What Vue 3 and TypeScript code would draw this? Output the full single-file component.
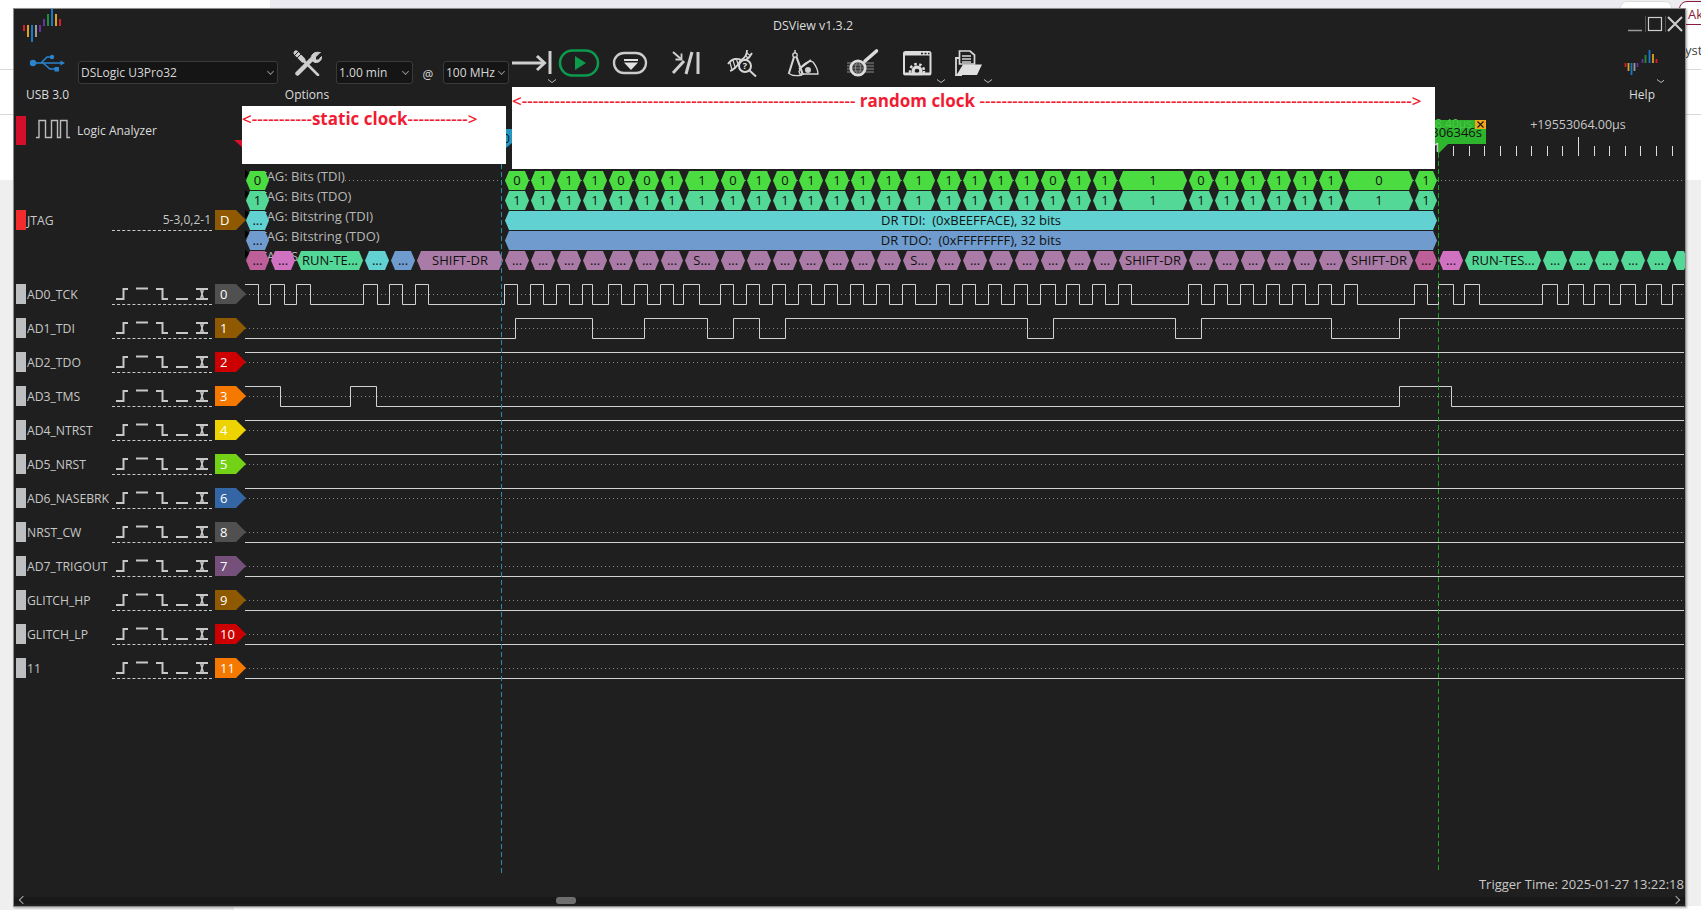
<script setup lang="ts">
type Signal = { name: string; tag: string; color: string; edges: number[]; high: boolean };

const tck = [258, 270, 284, 296, 310, 363, 377, 389, 402, 415, 428, 504, 517, 530, 543, 556, 569, 582, 592, 608, 621, 634, 647, 660, 673, 683, 699, 720, 733, 746, 759, 772, 785, 798, 811, 824, 837, 850, 863, 876, 889, 902, 915, 936, 949, 962, 975, 988, 1001, 1014, 1027, 1040, 1055, 1066, 1079, 1092, 1105, 1118, 1131, 1188, 1201, 1214, 1227, 1240, 1253, 1266, 1279, 1292, 1305, 1318, 1331, 1344, 1357, 1414, 1427, 1438, 1453, 1464, 1479, 1542, 1557, 1568, 1583, 1594, 1609, 1620, 1635, 1646, 1661, 1672];
const tdi = [515, 592, 644, 707, 733, 759, 785, 1027, 1053, 1175, 1201, 1331, 1399];
const tms = [280, 350, 376, 1399, 1451];

const signals: Signal[] = [
  { name: 'AD0_TCK', tag: '0', color: '#505050', edges: tck, high: true },
  { name: 'AD1_TDI', tag: '1', color: '#8f5902', edges: tdi, high: false },
  { name: 'AD2_TDO', tag: '2', color: '#cc0000', edges: [], high: true },
  { name: 'AD3_TMS', tag: '3', color: '#f57900', edges: tms, high: true },
  { name: 'AD4_NTRST', tag: '4', color: '#edd400', edges: [], high: true },
  { name: 'AD5_NRST', tag: '5', color: '#73d216', edges: [], high: true },
  { name: 'AD6_NASEBRK', tag: '6', color: '#3465a4', edges: [], high: true },
  { name: 'NRST_CW', tag: '8', color: '#505050', edges: [], high: false },
  { name: 'AD7_TRIGOUT', tag: '7', color: '#75507b', edges: [], high: false },
  { name: 'GLITCH_HP', tag: '9', color: '#8f5902', edges: [], high: false },
  { name: 'GLITCH_LP', tag: '10', color: '#cc0000', edges: [], high: false },
  { name: '11', tag: '11', color: '#f57900', edges: [], high: false },
];

const START = 245;
const END = 1684;

function wave(s: Signal, i: number): string {
  const c = 294 + 34 * i;
  let high = s.high;
  let d = `M${START} ${c + (high ? -10 : 10) + 0.5}`;
  for (const e of s.edges) {
    high = !high;
    d += `H${e + 0.5}V${c + (high ? -10 : 10) + 0.5}`;
  }
  return d + `H${END}`;
}

function hexPoints(x0: number, x1: number, y: number): string {
  const t = y - 9.5;
  const b = y + 9.5;
  return `${x0},${y} ${x0 + 4},${t} ${x1 - 4},${t} ${x1},${y} ${x1 - 4},${b} ${x0 + 4},${b}`;
}

const GREEN = '#4bdc42';
const TEAL = '#54d897';
const CYAN = '#61d1d1';
const BLUE = '#6f9bce';
const PURPLE = '#aa7ba6';
const PINKD = '#bd5f98';
const PINK = '#d072c1';

const bounds = [504, 530, 556, 582, 608, 634, 660, 684, 720, 746, 772, 798, 824, 850, 876, 902, 936, 962, 988, 1014, 1040, 1066, 1092, 1118, 1188, 1214, 1240, 1266, 1292, 1318, 1344, 1414, 1438];
const bits = '01110011010111111111011101111101';
const names: Record<number, string> = { 7: 'S...', 15: 'S...', 23: 'SHIFT-DR', 30: 'SHIFT-DR' };

type Hex = { x0: number; x1: number; y: number; fill: string; text: string };
const hexes: Hex[] = [
  { x0: 246, x1: 269, y: 180.5, fill: GREEN, text: '0' },
  { x0: 246, x1: 269, y: 200.5, fill: TEAL, text: '1' },
  { x0: 246, x1: 269, y: 220.5, fill: CYAN, text: '...' },
  { x0: 246, x1: 269, y: 240.5, fill: BLUE, text: '...' },
  { x0: 246, x1: 269, y: 260.5, fill: PINKD, text: '...' },
  { x0: 271, x1: 295, y: 260.5, fill: PINK, text: '...' },
  { x0: 297, x1: 363, y: 260.5, fill: TEAL, text: 'RUN-TE...' },
  { x0: 365, x1: 389, y: 260.5, fill: CYAN, text: '...' },
  { x0: 391, x1: 415, y: 260.5, fill: BLUE, text: '...' },
  { x0: 417, x1: 503, y: 260.5, fill: PURPLE, text: 'SHIFT-DR' },
  { x0: 505, x1: 1437, y: 220.5, fill: CYAN, text: 'DR TDI:  (0xBEEFFACE), 32 bits' },
  { x0: 505, x1: 1437, y: 240.5, fill: BLUE, text: 'DR TDO:  (0xFFFFFFFF), 32 bits' },
  { x0: 1439, x1: 1463, y: 260.5, fill: PINK, text: '...' },
  { x0: 1465, x1: 1541, y: 260.5, fill: TEAL, text: 'RUN-TES...' },
  ...[1543, 1569, 1595, 1621, 1647].map((x) => ({ x0: x, x1: x + 24, y: 260.5, fill: TEAL, text: '...' })),
  { x0: 1673, x1: 1688, y: 260.5, fill: TEAL, text: '' },
];
for (let i = 0; i < 32; i++) {
  const x0 = bounds[i] + 1;
  const x1 = bounds[i + 1] - 1;
  hexes.push({ x0, x1, y: 180.5, fill: GREEN, text: bits[i] });
  hexes.push({ x0, x1, y: 200.5, fill: TEAL, text: '1' });
  hexes.push({ x0, x1, y: 260.5, fill: i === 31 ? PINKD : PURPLE, text: i === 31 ? '...' : names[i] ?? '...' });
}

const decoders = ['JTAG: Bits (TDI)', 'JTAG: Bits (TDO)', 'JTAG: Bitstring (TDI)', 'JTAG: Bitstring (TDO)', 'JTAG: S'];
const ticks = [1453, 1469, 1484, 1500, 1516, 1531, 1547, 1562, 1594, 1609, 1625, 1640, 1656, 1672];
const centers = signals.map((_, i) => 294 + 34 * i);
const logoBars = [
  { x: 1, y1: 16, y2: 22, c: '#d81e2c' },
  { x: 5, y1: 16, y2: 28, c: '#e0a020' },
  { x: 9, y1: 16, y2: 33, c: '#1a78c8' },
  { x: 13, y1: 16, y2: 28, c: '#9a9a9a' },
  { x: 17, y1: 16, y2: 23, c: '#6a2fa0' },
  { x: 21, y1: 10, y2: 17, c: '#6a2fa0' },
  { x: 25, y1: 5, y2: 17, c: '#1f8f3a' },
  { x: 29, y1: 0, y2: 17, c: '#1a78c8' },
  { x: 33, y1: 5, y2: 17, c: '#e0a020' },
  { x: 37, y1: 10, y2: 17, c: '#d81e2c' },
];
const d = (n: number): string => '-'.repeat(n);
</script>

<template>
  <div class="page">
    <div class="bd bd-top"></div>
    <div class="bd bd-white-left"></div>
    <div class="bd bd-white-right"></div>
    <div class="bd bd-line1"></div>
    <div class="bd bd-line2"></div>
    <div class="bd bd-pill"></div>
    <div class="bd bd-tab">Ak</div>
    <div class="bd bd-ystk">ystk</div>
    <div class="bd bd-bottom"></div>

    <div class="window">
      <header class="titlebar">
        <svg class="logo" width="38" height="33" viewBox="0 0 38 33">
          <line v-for="b in logoBars" :key="b.x" :x1="b.x" :x2="b.x" :y1="b.y1" :y2="b.y2" :stroke="b.c" stroke-width="2" />
        </svg>
        <span class="title">DSView v1.3.2</span>
        <div class="controls">
          <svg width="56" height="33" viewBox="1628 9 56 33">
            <g stroke="#cfcfcf" fill="none">
              <path d="M1628 30.5H1642" stroke-width="1.5" stroke="#999" />
              <path d="M1645.5 16V32" stroke="#555" />
              <rect x="1648.5" y="17.5" width="13" height="13" stroke-width="1.2" />
              <path d="M1665.5 16V32" stroke="#555" />
              <path d="M1668 17L1682 31M1682 17L1668 31" stroke-width="2" />
            </g>
          </svg>
        </div>
      </header>

      <div class="toolbar">
        <div class="tool tool-usb">
          <svg width="45" height="30" viewBox="25 46 45 30">
            <g fill="#2a85d0" stroke="#2a85d0">
              <circle cx="33" cy="63" r="3.2" stroke="none" />
              <path d="M33 63H62" stroke-width="1.5" fill="none" />
              <path d="M65 63L60.5 60.5V65.5Z" stroke="none" />
              <path d="M41 63L47 57H52M43 63L50 69H55" stroke-width="1.5" fill="none" />
              <circle cx="52" cy="57" r="2.2" stroke="none" />
              <rect x="54.5" y="67" width="4.5" height="4.5" stroke="none" />
            </g>
          </svg>
          <span class="tool-label">USB 3.0</span>
        </div>
        <div class="combo combo-dev"><span>DSLogic U3Pro32</span><i class="chev"></i></div>
        <div class="tool tool-opt">
          <svg width="44" height="30" viewBox="285 46 44 30">
            <g fill="none" stroke="#cdcdcd" stroke-linecap="round">
              <path d="M297.5 73.5L311 60" stroke-width="4.5" />
              <path d="M320 52.5L315.5 57V60H318.5L321.5 56.5C322 60 319 63 315 62.5L311 60C310.5 55 314 51 320 52.5Z" fill="#cdcdcd" stroke-width="1" />
              <path d="M296 53L303 60" stroke-width="5" />
              <path d="M303 60L318 75" stroke-width="2.6" />
            </g>
            <path d="M294 56L299 51M296.5 58.5L301.500 53.500" stroke="#1f1f1f" stroke-width="1" />
          </svg>
          <span class="tool-label">Options</span>
        </div>
        <div class="combo combo-time"><span>1.00 min</span><i class="chev"></i></div>
        <span class="at">@</span>
        <div class="combo combo-rate"><span>100 MHz</span><i class="chev"></i></div>

        <div class="actions">
          <svg width="48" height="40" viewBox="510 46 48 40">
            <g fill="none" stroke="#cfcfcf" stroke-width="3">
              <path d="M512 63H544" />
              <path d="M537 56L544.500 63L537 70" />
              <path d="M550 51V74" />
              <path d="M548 79.500L552 82.500L556 79.500" stroke-width="1" stroke="#bbb" />
            </g>
          </svg>
          <svg width="48" height="40" viewBox="558 46 48 40">
            <rect x="560" y="50.500" width="38" height="25" rx="12.500" fill="none" stroke="#0c9a4c" stroke-width="2.600" />
            <path d="M575 56L586 63L575 70Z" fill="#0c9a4c" />
          </svg>
          <svg width="54" height="40" viewBox="606 46 54 40">
            <rect x="614" y="53" width="32" height="20" rx="10" fill="none" stroke="#cccccc" stroke-width="2.300" />
            <rect x="624" y="59" width="14" height="2" fill="#e2e2e2" />
            <path d="M624 62.500H638L631 70Z" fill="#e2e2e2" />
          </svg>
          <svg width="54" height="40" viewBox="660 46 54 40">
            <g fill="none" stroke="#cfcfcf" stroke-width="3">
              <path d="M673 73L684 61" />
              <path d="M686 74L692 52" />
              <path d="M698 52V74" />
              <path d="M673 52L681 59" stroke-width="2" />
              <path d="M681.500 53.500V59.500H675.500" stroke-width="1.800" />
            </g>
          </svg>
          <svg width="60" height="40" viewBox="714 46 60 40">
            <g fill="none" stroke="#d6d6d6">
              <path d="M728 64C732 58 738 58 741 60C745 58 747 55 747 50" stroke-width="1.800" />
              <path d="M730 71C733 70 738 66 740 61C744 62 749 59 752 53" stroke-width="1.800" />
              <path d="M730 62.500L732 70M733 60.500L735.500 68.500M736.500 59.500L738.500 65.500M743 58L746 62M745 55.500L749 58.500M746.500 53L750.500 55.500" stroke-width="1.200" />
              <circle cx="745" cy="66" r="6" fill="#1f1f1f" stroke-width="2" />
              <path d="M749.500 70.500L756 76.500" stroke-width="2" />
            </g>
            <text class="qmark" x="745" y="69">?</text>
          </svg>
          <svg width="58" height="40" viewBox="774 46 58 40">
            <g fill="none" stroke="#d6d6d6" stroke-width="1.300">
              <path d="M795 50V53" stroke-width="1.500" />
              <circle cx="795" cy="55" r="2.200" />
              <path d="M794 57L789 73" stroke-width="2" />
              <path d="M796.500 57L803 75" stroke-width="2.200" />
              <path d="M799 71.500C802 63 810 60 813 62C816 66 818 70 818 74H800Z" />
              <path d="M799 69L811 60" stroke-width="2" />
              <path d="M788 73C792 76 798 76 802 75" />
              <circle cx="808" cy="70" r="3" fill="#cfcfcf" stroke="none" />
            </g>
          </svg>
          <svg width="60" height="40" viewBox="832 46 60 40">
            <rect x="847" y="62" width="27" height="11" fill="#555" />
            <path d="M847 64.500H874M847 67.500H874M847 70.500H874" stroke="#1f1f1f" stroke-width="0.800" />
            <g fill="none" stroke="#dcdcdc">
              <circle cx="858" cy="68" r="7.200" fill="#333" stroke-width="2.800" />
              <path d="M865 61L876.500 51" stroke-width="3.600" stroke-linecap="round" />
            </g>
            <g fill="none" stroke="#999" stroke-width="0.800">
              <ellipse cx="858" cy="68" rx="2.500" ry="5.500" />
              <path d="M852.500 68H863.500M853.500 65H862.500M853.500 71H862.500" />
            </g>
          </svg>
          <svg width="58" height="40" viewBox="892 46 58 40">
            <rect x="904" y="52" width="26.500" height="22.500" rx="1.500" fill="#1f1f1f" stroke="#dcdcdc" stroke-width="2" />
            <rect x="904" y="52" width="26.500" height="3.500" fill="#dcdcdc" />
            <path d="M921 53.500H923M924.500 53.500H926.500M928 53.500H929.500" stroke="#1f1f1f" stroke-width="1.500" />
            <circle cx="917" cy="71" r="5.500" fill="#dcdcdc" />
            <circle cx="917" cy="71" r="7" fill="none" stroke="#dcdcdc" stroke-width="2.500" stroke-dasharray="2.500 2.500" />
            <circle cx="917" cy="71" r="2.300" fill="#1f1f1f" />
            <rect x="904" y="72.500" width="26.500" height="3" fill="#dcdcdc" />
            <rect x="904" y="75.500" width="26.500" height="6" fill="#1f1f1f" />
            <path d="M937 79.500L941 82.500L945 79.500" fill="none" stroke="#bbb" />
          </svg>
          <svg width="50" height="40" viewBox="950 46 50 40">
            <path d="M959.500 51H970L974.500 55V64H959.500Z" fill="#1f1f1f" stroke="#d8d8d8" stroke-width="1.700" />
            <path d="M962 56H971M962 59H971M962 62H971" stroke="#d8d8d8" stroke-width="1.300" />
            <path d="M959 58H956V75H962" fill="none" stroke="#d8d8d8" stroke-width="1.800" />
            <path d="M963 64.500H982L977 75H956.500Z" fill="#e0e0e0" />
            <path d="M984 79.500L988 82.500L992 79.500" fill="none" stroke="#bbb" />
          </svg>
        </div>

        <div class="tool tool-help">
          <svg width="44" height="40" viewBox="1620 46 44 40">
            <g stroke-width="1.800">
              <path d="M1625.500 63V67" stroke="#d81e2c" />
              <path d="M1628.500 63V71" stroke="#e0a020" />
              <path d="M1631.500 63V75" stroke="#1a78c8" />
              <path d="M1634.500 63V71" stroke="#9a9a9a" />
              <path d="M1637.500 63V67" stroke="#6a2fa0" />
              <path d="M1642.500 59V63" stroke="#6a2fa0" />
              <path d="M1645.500 55V63" stroke="#1f8f3a" />
              <path d="M1649.500 50V63" stroke="#1a78c8" />
              <path d="M1653 54V63" stroke="#e0a020" />
              <path d="M1656.500 59V63" stroke="#d81e2c" />
            </g>
            <path d="M1657 79.500L1661 82.500L1665 79.500" fill="none" stroke="#bbb" />
          </svg>
          <span class="tool-label help-label">Help</span>
        </div>
      </div>

      <div class="view">
        <div class="labels">
          <div class="mode-row">
            <span class="mode-chip"></span>
            <svg class="mode-wave" width="34" height="20" viewBox="0 0 34 20">
              <path d="M0 18.500H3V1.500H9.500V18.500H15.500V1.500H21.500V18.500H24.500V1.500H31V18.500H34" fill="none" stroke="#bdbdbd" stroke-width="1.400" />
            </svg>
            <span class="mode-text">Logic Analyzer</span>
          </div>
          <div class="jtag-row">
            <span class="chip chip-red"></span>
            <span class="name">JTAG</span>
            <span class="trig trig-text">5-3,0,2-1</span>
            <span class="tag tag-d">D</span>
          </div>
          <div v-for="s in signals" :key="s.name" class="row">
            <span class="chip"></span>
            <span class="name">{{ s.name }}</span>
            <span class="trig">
              <svg width="100" height="20" viewBox="0 0 100 20">
                <g fill="none" stroke="#c8c8c8" stroke-width="2">
                  <path d="M4 15H11.500V5H16" />
                  <path d="M24 4.500H36" />
                  <path d="M44 5H50.500V15H56" />
                  <path d="M64 15H76" />
                  <path d="M84 5H96M84 15H96" />
                  <path d="M88.500 5L90 10L88.500 15M91.500 5L90 10L91.500 15" stroke-width="1.500" />
                </g>
              </svg>
            </span>
            <span class="tag" :style="{ background: s.color }">{{ s.tag }}</span>
          </div>
        </div>

        <svg class="canvas" width="1440" height="770" viewBox="245 106 1440 770">
          <path d="M345 180.500H1684" class="dots" />
          <path v-for="c in centers" :key="c" :d="`M245 ${c + 0.5}H1684`" class="dots" />

          <text v-for="(t, i) in decoders" :key="t" class="dec-label" :x="256" :y="180.500 + 20 * i">{{ t }}</text>
          <path v-for="i in 5" :key="i" :d="`M245 ${150 + 20 * i}l5 4l-5 4z`" fill="#000" />

          <g v-for="(h, i) in hexes" :key="i">
            <polygon :points="hexPoints(h.x0, h.x1, h.y)" :fill="h.fill" />
            <text v-if="h.text" class="hex-text" :x="(h.x0 + h.x1) / 2" :y="h.y + 4.500">{{ h.text }}</text>
          </g>

          <path v-for="(s, i) in signals" :key="s.name" :d="wave(s, i)" class="wave" />

          <path d="M501.500 164V874" class="cursor-blue" />
          <path d="M1438.500 153V873" class="cursor-green" />

          <path d="M495 129H512V143L506 148H495Z" fill="#2596be" />
          <text class="flag-text" x="503" y="143">0</text>

          <rect x="1400" y="120" width="86" height="24" fill="#2db52d" />
          <text class="flag-faint" x="1435" y="128">8.40µs</text>
          <text class="flag-val" x="1482" y="137">306346s</text>
          <rect x="1475" y="120" width="11" height="9" fill="#f0a818" />
          <path d="M1477.500 121.500L1483.500 127.500M1483.500 121.500L1477.500 127.500" stroke="#1a1a1a" stroke-width="1.200" />
          <path d="M1438 144H1448L1438 154Z" fill="#2db52d" />
          <text class="flag-one" x="1437" y="152">1</text>

          <path v-for="t in ticks" :key="t" :d="`M${t + 0.5} 146V156`" class="tick" />
          <path d="M1578.500 137V156" class="tick" />
          <text class="ruler-text" x="1578" y="129">+19553064.00µs</text>
        </svg>
      </div>

      <div class="footer">Trigger Time: 2025-01-27 13:22:18</div>
      <div class="scroll">
        <span class="arrow arrow-l"></span>
        <span class="thumb"></span>
        <span class="arrow arrow-r"></span>
      </div>

      <i class="red-marker"></i>
      <div class="note note-static">&lt;{{ d(11) }}<b>static clock</b>{{ d(11) }}&gt;</div>
      <div class="note note-random">&lt;{{ d(61) }} <b>random clock</b> {{ d(79) }}&gt;</div>
    </div>
  </div>
</template>

<style>
html, body { background: #efefef; }
</style>

<style scoped>
.page {
  position: relative;
  width: 1701px;
  height: 910px;
  overflow: hidden;
  background: #efefef;
  padding: 9px 0 0 14px;
  box-sizing: border-box;
  font-family: "Open Sans", "Noto Sans", sans-serif;
  font-size: 12px;
  color: #c8c8c8;
}
.bd { position: absolute; }
.bd-top { left: 270px; top: 0; width: 1431px; height: 9px; background: #ecebf0; }
.bd-white-left { left: 0; top: 0; width: 270px; height: 180px; background: #fff; }
.bd-white-right { left: 1685px; top: 6px; width: 16px; height: 174px; background: #fff; }
.bd-line1 { left: 0; top: 69px; width: 1701px; height: 1px; background: #d8d8d8; }
.bd-line2 { left: 0; top: 114px; width: 1701px; height: 1px; background: #d8d8d8; }
.bd-pill { left: 1620px; top: 1px; width: 52px; height: 14px; background: #fff; border: 1px solid #ddd; border-radius: 8px; box-sizing: border-box; }
.bd-tab { left: 1679px; top: 1px; width: 30px; height: 24px; background: #fff; border: 1px solid #8a1c3a; border-radius: 8px; color: #8a1c3a; font-size: 13px; padding: 3px 0 0 8px; box-sizing: border-box; }
.bd-ystk { left: 1685px; top: 41px; color: #444; font-size: 13px; }
.bd-bottom { left: 234px; top: 906px; width: 1467px; height: 4px; background: #fff; }

.window {
  position: relative;
  width: 1671px;
  height: 897px;
  background: #1f1f1f;
  box-shadow: 0 0 0 1px #8c8c8c, 1px 1px 2px 1px rgba(0, 0, 0, 0.3);
  display: flex;
  flex-direction: column;
}

.titlebar {
  height: 33px;
  display: flex;
  align-items: center;
  padding: 0 1px 0 9px;
  flex: none;
}
.logo { flex: none; }
.title { margin-left: 712px; color: #dcdcdc; font-size: 12.4px; width: 94px; white-space: nowrap; }
.controls { margin-left: auto; display: flex; }
.controls svg { display: block; }

.toolbar {
  height: 64px;
  flex: none;
  display: flex;
  align-items: flex-start;
  padding: 4px 0 0 11px;
  box-sizing: border-box;
}
.tool { display: flex; flex-direction: column; align-items: center; flex: none; }
.tool svg { display: block; }
.tool-usb { width: 45px; }
.tool-opt { width: 44px; margin-left: 7px; }
.tool-label { margin-top: 11px; line-height: 16px; white-space: nowrap; color: #dcdcdc; }
.help-label { margin-top: 1px; }
.tool-help { margin-left: auto; margin-right: 21px; width: 44px; }

.combo {
  flex: none;
  margin-top: 15px;
  height: 23px;
  box-sizing: border-box;
  background: #151515;
  border: 1px solid #3a3a3a;
  border-radius: 3px;
  display: flex;
  align-items: center;
  padding-left: 2px;
  color: #d8d8d8;
  position: relative;
  white-space: nowrap;
}
.combo-dev { width: 200px; margin-left: 8px; }
.combo-time { width: 77px; margin-left: 7px; }
.combo-rate { width: 66px; }
.at { flex: none; width: 20px; margin: 21px 5px 0; line-height: 16px; text-align: center; color: #d8d8d8; }
.chev {
  position: absolute;
  right: 4px;
  top: 7px;
  width: 4px;
  height: 4px;
  border-right: 1px solid #8a8a8a;
  border-bottom: 1px solid #8a8a8a;
  transform: rotate(45deg);
}
.actions { display: flex; flex: none; margin-left: 1px; }
.actions svg { display: block; flex: none; }
.qmark { font: bold 9px "Open Sans", sans-serif; fill: #e6e6e6; text-anchor: middle; }

.view { display: flex; flex: none; height: 770px; }
.labels { width: 231px; flex: none; position: relative; z-index: 1; }
.mode-row { height: 54px; display: flex; align-items: flex-start; padding: 10px 0 0 2px; box-sizing: border-box; }
.mode-chip { width: 10px; height: 29px; background: #d30f2a; flex: none; }
.mode-wave { margin: 3px 0 0 10px; flex: none; }
.mode-text { margin: 5px 0 0 7px; line-height: 20px; color: #dcdcdc; white-space: nowrap; }
.jtag-row { height: 117px; display: flex; align-items: flex-start; padding: 50px 0 0 2px; box-sizing: border-box; }
.row { height: 34px; display: flex; align-items: flex-start; padding: 7px 0 0 2px; box-sizing: border-box; }
.chip { width: 10px; height: 20px; background: #bdbfc1; flex: none; }
.chip-red { background: #f22c2c; }
.name { width: 85px; flex: none; line-height: 22px; font-size: 12.2px; margin-left: 1px; white-space: nowrap; color: #c8c8c8; }
.trig { width: 100px; height: 21px; flex: none; box-sizing: border-box; border-bottom: 1px dashed #c8c8c8; display: block; }
.trig svg { display: block; }
.trig-text { text-align: right; line-height: 20px; padding-right: 1px; }
.tag {
  width: 31px;
  height: 20px;
  margin-left: 3px;
  flex: none;
  clip-path: polygon(0 0, 21px 0, 31px 10px, 21px 20px, 0 20px);
  color: #fff;
  line-height: 21px;
  text-align: left;
  padding-left: 5px;
  box-sizing: border-box;
  font-size: 13px;
}
.tag-d { background: #8f5902; }

.canvas { display: block; flex: none; }
.dots { stroke: #8a8a8a; stroke-width: 1; stroke-dasharray: 1 3; fill: none; }
.wave { stroke: #d2d2d2; stroke-width: 1; fill: none; }
.dec-label { font-size: 13px; fill: #b8b8b8; }
.hex-text { font-size: 13px; fill: #111; text-anchor: middle; white-space: pre; }
.cursor-blue { stroke: #2a8ca8; stroke-width: 1; stroke-dasharray: 5 3; fill: none; }
.cursor-green { stroke: #1f9f1f; stroke-width: 1; stroke-dasharray: 5 3; fill: none; }
.flag-text { font-size: 12px; fill: #111; }
.flag-faint { font-size: 12px; fill: #4cc84c; }
.flag-val { font-size: 13px; fill: #111; text-anchor: end; }
.flag-one { font-size: 12px; fill: #fff; text-anchor: middle; }
.tick { stroke: #dcdcdc; stroke-width: 1; fill: none; }
.ruler-text { font-size: 12.5px; fill: #c8c8c8; text-anchor: middle; }

.footer {
  flex: none;
  height: 21px;
  line-height: 16px;
  text-align: right;
  padding-right: 1px;
  color: #c8c8c8;
  font-size: 13px;
  white-space: nowrap;
}
.scroll {
  flex: none;
  height: 7px;
  background: #191919;
  position: relative;
}
.thumb { position: absolute; left: 542px; top: 0; width: 20px; height: 7px; border-radius: 3px; background: #6e6e6e; }
.arrow { position: absolute; top: 0; width: 5px; height: 5px; border-left: 1px solid #aaa; border-bottom: 1px solid #aaa; transform: rotate(45deg); }
.arrow-l { left: 6px; }
.arrow-r { right: 6px; transform: rotate(225deg); }

.red-marker {
  position: absolute;
  left: 220px;
  top: 131px;
  width: 9px;
  height: 8px;
  background: #d8102c;
  clip-path: polygon(0 0, 100% 0, 100% 100%);
}
.note {
  position: absolute;
  background: #fff;
  color: #f01c34;
  white-space: nowrap;
  overflow: hidden;
  font-size: 17px;
  font-weight: 600;
  line-height: 26px;
  box-sizing: border-box;
}
.note b { font-weight: 700; }
.note-static { left: 228px; top: 97px; width: 264px; height: 58px; }
.note-random { left: 498px; top: 78px; width: 923px; height: 82px; padding-top: 1px; }
</style>
